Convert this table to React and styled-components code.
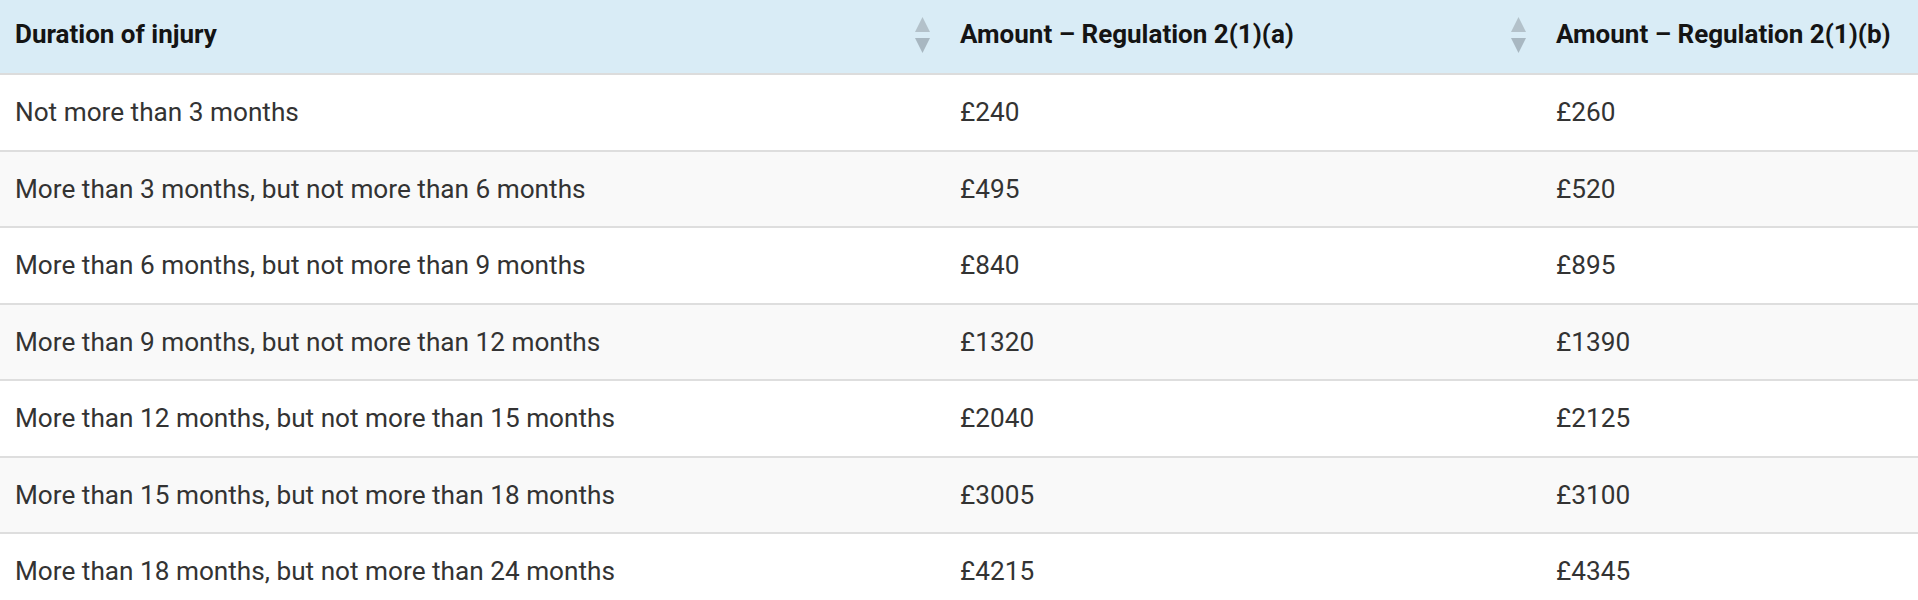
import React from "react";
import styled, { createGlobalStyle } from "styled-components";

const GlobalStyle = createGlobalStyle`
  html, body {
    margin: 0;
    padding: 0;
    background: #ffffff;
    overflow: hidden;
  }
  body {
    font-family: Roboto, "Liberation Sans", Arial, sans-serif;
  }
`;

const Wrapper = styled.div`
  width: 1918px;
  height: 600px;
  overflow: hidden;
`;

const Table = styled.table`
  width: 1961px;
  border-collapse: collapse;
  table-layout: fixed;
`;

const HeadCell = styled.th`
  width: ${(p) => p.$width}px;
  height: 73.3px;
  padding: 0 15px;
  box-sizing: border-box;
  background: #d9ecf6;
  border-bottom: 2px solid #dcdcdc;
  text-align: left;
  vertical-align: top;
  font-size: 26px;
  font-weight: 700;
  color: #141414;
`;

const HeadInner = styled.div`
  display: flex;
  align-items: flex-start;
  justify-content: space-between;
  height: 73.3px;
`;

const HeadLabel = styled.span`
  display: block;
  padding-top: 19px;
  line-height: 30px;
  white-space: nowrap;
`;

const SortIcon = styled.svg`
  flex: none;
  width: 15px;
  height: 36px;
  margin-top: 17px;
`;

const Row = styled.tr`
  background: ${(p) => (p.$striped ? "#f9f9f9" : "#ffffff")};
  border-top: 2px solid #dedede;
`;

const Cell = styled.td`
  height: 76.5px;
  padding: 22px 15px 0;
  box-sizing: border-box;
  vertical-align: top;
  font-size: 26.2px;
  line-height: 30px;
  color: #333333;
  white-space: nowrap;
`;

const columns = [
  { label: "Duration of injury", width: 945 },
  { label: "Amount – Regulation 2(1)(a)", width: 596 },
  { label: "Amount – Regulation 2(1)(b)", width: 420 },
];

const rows = [
  ["Not more than 3 months", "£240", "£260"],
  ["More than 3 months, but not more than 6 months", "£495", "£520"],
  ["More than 6 months, but not more than 9 months", "£840", "£895"],
  ["More than 9 months, but not more than 12 months", "£1320", "£1390"],
  ["More than 12 months, but not more than 15 months", "£2040", "£2125"],
  ["More than 15 months, but not more than 18 months", "£3005", "£3100"],
  ["More than 18 months, but not more than 24 months", "£4215", "£4345"],
];

function Sort() {
  return (
    <SortIcon viewBox="0 0 15 36">
      <polygon points="7.5,0 15,15 0,15" fill="#b3c1ca" />
      <polygon points="0,21 15,21 7.5,36" fill="#a8b7c1" />
    </SortIcon>
  );
}

export default function App() {
  return (
    <Wrapper>
      <GlobalStyle />
      <Table>
        <thead>
          <tr>
            {columns.map((col) => (
              <HeadCell key={col.label} $width={col.width}>
                <HeadInner>
                  <HeadLabel>{col.label}</HeadLabel>
                  <Sort />
                </HeadInner>
              </HeadCell>
            ))}
          </tr>
        </thead>
        <tbody>
          {rows.map((row, i) => (
            <Row key={i} $striped={i % 2 === 1}>
              {row.map((value, j) => (
                <Cell key={j}>{value}</Cell>
              ))}
            </Row>
          ))}
        </tbody>
      </Table>
    </Wrapper>
  );
}
